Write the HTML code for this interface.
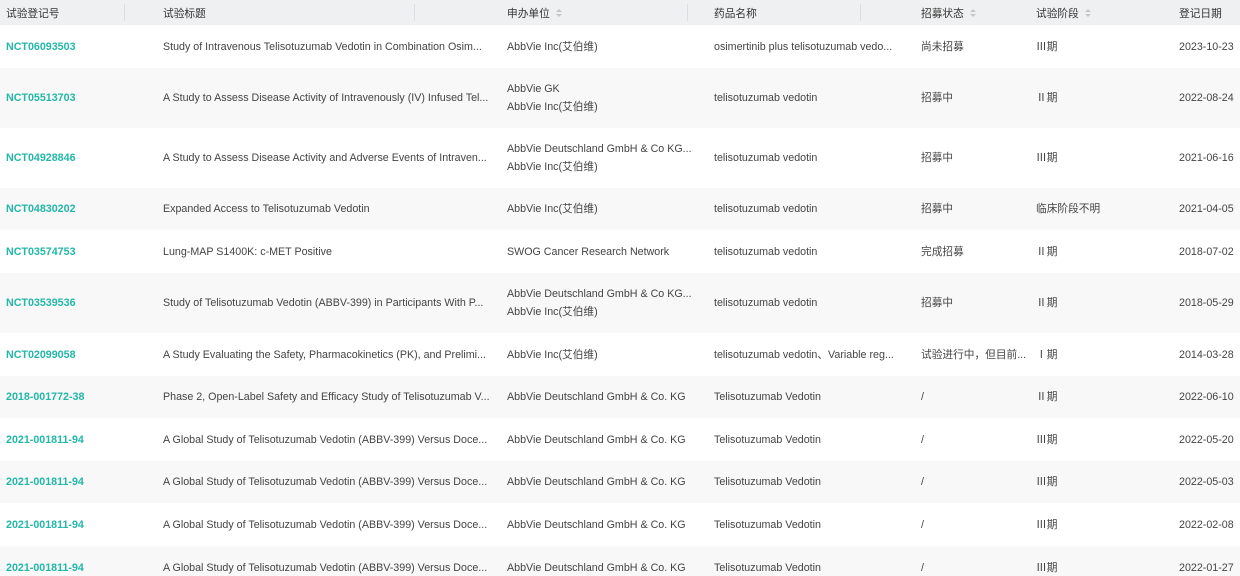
<!DOCTYPE html>
<html><head><meta charset="utf-8"><style>
*{margin:0;padding:0;box-sizing:border-box}
html,body{width:1240px;height:576px;overflow:hidden}
body{background:#fff;font-family:"Liberation Sans","Noto Sans CJK SC",sans-serif;font-size:10.7px;color:#444;position:relative}
.hd{position:absolute;left:0;top:0;width:1240px;height:25px;background:#eef0f1;color:#333;font-size:10.7px}
.hd span{position:absolute;top:6px;white-space:nowrap}
.sep{position:absolute;top:4px;width:1px;height:17px;background:#dcdfe2}
.arr{position:absolute;top:2px;width:6px;height:9px}
.arr:before,.arr:after{content:"";position:absolute;left:0;border-left:3px solid transparent;border-right:3px solid transparent}
.arr:before{top:0;border-bottom:3px solid #c4c7ca}
.arr:after{top:5px;border-top:3px solid #c4c7ca}
.row{position:absolute;left:0;width:1240px}
.row.g{background:#f8f8f8}
.c{position:absolute;top:50%;transform:translateY(-50%);white-space:nowrap;line-height:18px}
.id{color:#23b7a8;font-weight:bold;left:6px}
</style></head><body>
<div class="hd">
<span style="left:6px">试验登记号</span><div class="sep" style="left:124px"></div>
<span style="left:163px">试验标题</span><div class="sep" style="left:414px"></div>
<span style="left:507px">申办单位</span><i class="arr" style="left:556px;top:9px"></i><div class="sep" style="left:687px"></div>
<span style="left:714px">药品名称</span><div class="sep" style="left:860px"></div>
<span style="left:921px">招募状态</span><i class="arr" style="left:970px;top:9px"></i>
<span style="left:1036px">试验阶段</span><i class="arr" style="left:1085px;top:9px"></i><div class="sep" style="left:1078px;display:none"></div>
<span style="left:1179px">登记日期</span>
</div>

<div class="row" style="top:25px;height:43px"><span class="c id">NCT06093503</span><span class="c" style="left:163px">Study of Intravenous Telisotuzumab Vedotin in Combination Osim...</span><span class="c" style="left:507px">AbbVie Inc(艾伯维)</span><span class="c" style="left:714px">osimertinib plus telisotuzumab vedo...</span><span class="c" style="left:921px">尚未招募</span><span class="c" style="left:1036px">Ⅲ期</span><span class="c" style="left:1179px">2023-10-23</span></div>

<div class="row g" style="top:68px;height:60px"><span class="c id">NCT05513703</span><span class="c" style="left:163px">A Study to Assess Disease Activity of Intravenously (IV) Infused Tel...</span><span class="c" style="left:507px">AbbVie GK<br>AbbVie Inc(艾伯维)</span><span class="c" style="left:714px">telisotuzumab vedotin</span><span class="c" style="left:921px">招募中</span><span class="c" style="left:1036px">Ⅱ期</span><span class="c" style="left:1179px">2022-08-24</span></div>

<div class="row" style="top:128px;height:60px"><span class="c id">NCT04928846</span><span class="c" style="left:163px">A Study to Assess Disease Activity and Adverse Events of Intraven...</span><span class="c" style="left:507px">AbbVie Deutschland GmbH &amp; Co KG...<br>AbbVie Inc(艾伯维)</span><span class="c" style="left:714px">telisotuzumab vedotin</span><span class="c" style="left:921px">招募中</span><span class="c" style="left:1036px">Ⅲ期</span><span class="c" style="left:1179px">2021-06-16</span></div>

<div class="row g" style="top:188px;height:42px"><span class="c id">NCT04830202</span><span class="c" style="left:163px">Expanded Access to Telisotuzumab Vedotin</span><span class="c" style="left:507px">AbbVie Inc(艾伯维)</span><span class="c" style="left:714px">telisotuzumab vedotin</span><span class="c" style="left:921px">招募中</span><span class="c" style="left:1036px">临床阶段不明</span><span class="c" style="left:1179px">2021-04-05</span></div>

<div class="row" style="top:230px;height:43px"><span class="c id">NCT03574753</span><span class="c" style="left:163px">Lung-MAP S1400K: c-MET Positive</span><span class="c" style="left:507px">SWOG Cancer Research Network</span><span class="c" style="left:714px">telisotuzumab vedotin</span><span class="c" style="left:921px">完成招募</span><span class="c" style="left:1036px">Ⅱ期</span><span class="c" style="left:1179px">2018-07-02</span></div>

<div class="row g" style="top:273px;height:60px"><span class="c id">NCT03539536</span><span class="c" style="left:163px">Study of Telisotuzumab Vedotin (ABBV-399) in Participants With P...</span><span class="c" style="left:507px">AbbVie Deutschland GmbH &amp; Co KG...<br>AbbVie Inc(艾伯维)</span><span class="c" style="left:714px">telisotuzumab vedotin</span><span class="c" style="left:921px">招募中</span><span class="c" style="left:1036px">Ⅱ期</span><span class="c" style="left:1179px">2018-05-29</span></div>

<div class="row" style="top:333px;height:43px"><span class="c id">NCT02099058</span><span class="c" style="left:163px">A Study Evaluating the Safety, Pharmacokinetics (PK), and Prelimi...</span><span class="c" style="left:507px">AbbVie Inc(艾伯维)</span><span class="c" style="left:714px">telisotuzumab vedotin、Variable reg...</span><span class="c" style="left:921px">试验进行中，但目前...</span><span class="c" style="left:1036px">Ⅰ期</span><span class="c" style="left:1179px">2014-03-28</span></div>

<div class="row g" style="top:376px;height:42px"><span class="c id">2018-001772-38</span><span class="c" style="left:163px">Phase 2, Open-Label Safety and Efficacy Study of Telisotuzumab V...</span><span class="c" style="left:507px">AbbVie Deutschland GmbH &amp; Co. KG</span><span class="c" style="left:714px">Telisotuzumab Vedotin</span><span class="c" style="left:921px">/</span><span class="c" style="left:1036px">Ⅱ期</span><span class="c" style="left:1179px">2022-06-10</span></div>

<div class="row" style="top:418px;height:43px"><span class="c id">2021-001811-94</span><span class="c" style="left:163px">A Global Study of Telisotuzumab Vedotin (ABBV-399) Versus Doce...</span><span class="c" style="left:507px">AbbVie Deutschland GmbH &amp; Co. KG</span><span class="c" style="left:714px">Telisotuzumab Vedotin</span><span class="c" style="left:921px">/</span><span class="c" style="left:1036px">Ⅲ期</span><span class="c" style="left:1179px">2022-05-20</span></div>

<div class="row g" style="top:461px;height:42px"><span class="c id">2021-001811-94</span><span class="c" style="left:163px">A Global Study of Telisotuzumab Vedotin (ABBV-399) Versus Doce...</span><span class="c" style="left:507px">AbbVie Deutschland GmbH &amp; Co. KG</span><span class="c" style="left:714px">Telisotuzumab Vedotin</span><span class="c" style="left:921px">/</span><span class="c" style="left:1036px">Ⅲ期</span><span class="c" style="left:1179px">2022-05-03</span></div>

<div class="row" style="top:503px;height:43px"><span class="c id">2021-001811-94</span><span class="c" style="left:163px">A Global Study of Telisotuzumab Vedotin (ABBV-399) Versus Doce...</span><span class="c" style="left:507px">AbbVie Deutschland GmbH &amp; Co. KG</span><span class="c" style="left:714px">Telisotuzumab Vedotin</span><span class="c" style="left:921px">/</span><span class="c" style="left:1036px">Ⅲ期</span><span class="c" style="left:1179px">2022-02-08</span></div>

<div class="row g" style="top:546px;height:43px"><span class="c id">2021-001811-94</span><span class="c" style="left:163px">A Global Study of Telisotuzumab Vedotin (ABBV-399) Versus Doce...</span><span class="c" style="left:507px">AbbVie Deutschland GmbH &amp; Co. KG</span><span class="c" style="left:714px">Telisotuzumab Vedotin</span><span class="c" style="left:921px">/</span><span class="c" style="left:1036px">Ⅲ期</span><span class="c" style="left:1179px">2022-01-27</span></div>
</body></html>
